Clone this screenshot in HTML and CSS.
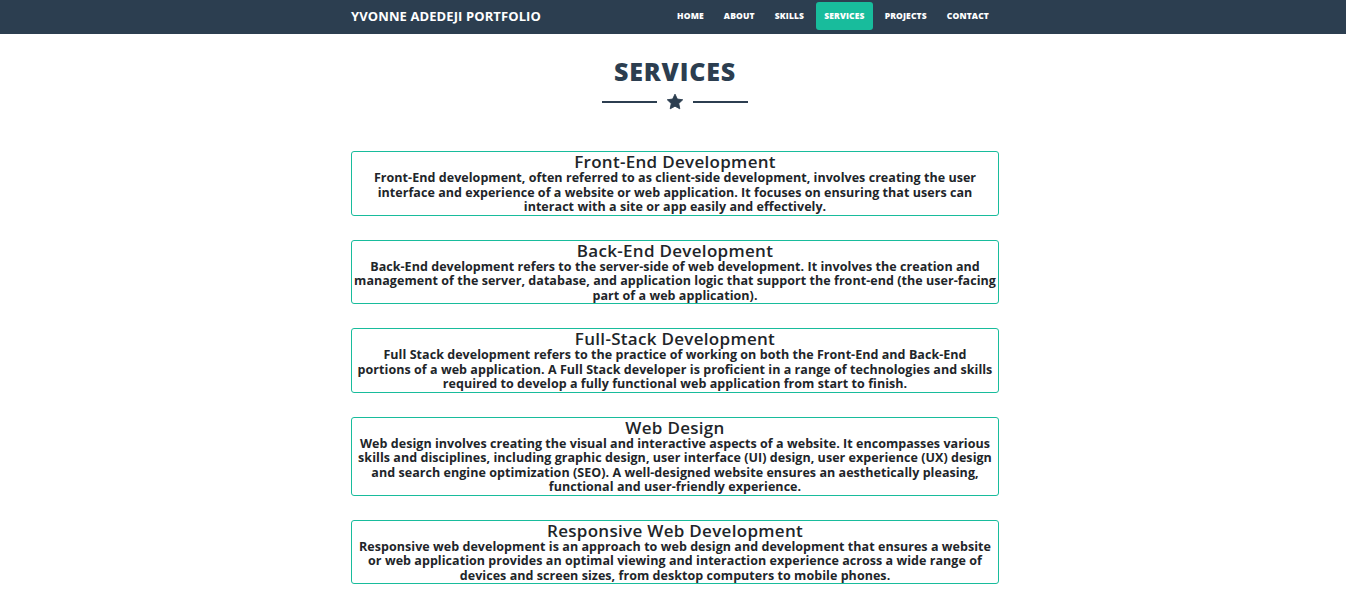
FILE: index.html
```html
<!DOCTYPE html>
<html lang="en">
<head>
<meta charset="utf-8">
<title>Yvonne Adedeji Portfolio - Services</title>
<link rel="stylesheet" href="styles.css">
</head>
<body>
<nav class="navbar">
  <div class="nav-inner">
    <a class="brand" href="#">YVONNE ADEDEJI PORTFOLIO</a>
    <ul class="nav-links">
      <li><a href="#">HOME</a></li>
      <li><a href="#">ABOUT</a></li>
      <li><a href="#">SKILLS</a></li>
      <li><a class="active" href="#">SERVICES</a></li>
      <li><a href="#">PROJECTS</a></li>
      <li><a href="#">CONTACT</a></li>
    </ul>
  </div>
</nav>
<main class="page">
  <h1 class="section-title">SERVICES</h1>
  <div class="divider">
    <span class="divider-line"></span>
    <svg class="divider-star" viewBox="0 0 24 24" width="18" height="18" aria-hidden="true"><path d="M12 1.5l3.1 6.6 7.2.9-5.3 5 1.4 7.1L12 17.6l-6.4 3.5 1.4-7.1-5.3-5 7.2-.9z" fill="#2c3e50" stroke="#2c3e50" stroke-width="1.2" stroke-linejoin="round"/></svg>
    <span class="divider-line"></span>
  </div>
  <section class="cards">
    <article class="card">
      <h2 class="card-title">Front-End Development</h2>
      <p class="card-text">Front-End development, often referred to as client-side development, involves creating the user interface and experience of a website or web application. It focuses on ensuring that users can interact with a site or app easily and effectively.</p>
    </article>
    <article class="card">
      <h2 class="card-title">Back-End Development</h2>
      <p class="card-text">Back-End development refers to the server-side of web development. It involves the creation and management of the server, database, and application logic that support the front-end (the user-facing part of a web application).</p>
    </article>
    <article class="card">
      <h2 class="card-title">Full-Stack Development</h2>
      <p class="card-text">Full Stack development refers to the practice of working on both the Front-End and Back-End<br>portions of a web application. A Full Stack developer is proficient in a range of technologies and skills required to develop a fully functional web application from start to finish.</p>
    </article>
    <article class="card">
      <h2 class="card-title">Web Design</h2>
      <p class="card-text">Web design involves creating the visual and interactive aspects of a website. It encompasses various skills and disciplines, including graphic design, user interface (UI) design, user experience (UX) design and search engine optimization (SEO). A well-designed website ensures an aesthetically pleasing, functional and user-friendly experience.</p>
    </article>
    <article class="card">
      <h2 class="card-title">Responsive Web Development</h2>
      <p class="card-text">Responsive web development is an approach to web design and development that ensures a website or web application provides an optimal viewing and interaction experience across a wide range of devices and screen sizes, from desktop computers to mobile phones.</p>
    </article>
  </section>
</main>
</body>
</html>
```
FILE: styles.css
```css
* { box-sizing: border-box; }
html, body { margin: 0; padding: 0; }
body {
  font-family: "Open Sans", "DejaVu Sans", sans-serif;
  color: #212529;
  background: #fff;
  padding-left: 4px;
}
.navbar {
  background: #2c3e50;
  height: 34px;
  margin-left: -4px;
  padding: 2px 0 4px 4px;
}
.nav-inner {
  width: 648px;
  margin: 0 auto;
  display: flex;
  align-items: center;
  justify-content: space-between;
  height: 28px;
}
.brand {
  color: #fff;
  text-decoration: none;
  font-weight: 700;
  font-size: 13px;
  letter-spacing: 0.1px;
}
.nav-links {
  list-style: none;
  display: flex;
  gap: 4px;
  margin: 0 2px 0 0;
  padding: 0;
}
.nav-links a {
  display: block;
  height: 28px;
  line-height: 28px;
  padding: 0 8px;
  color: #fff;
  text-decoration: none;
  font-size: 8.5px;
  font-weight: 800;
  letter-spacing: 0.15px;
  border-radius: 3px;
}
.nav-links a.active { background: #18bc9c; }
.page {
  width: 648px;
  margin: 0 auto;
}
.section-title {
  margin: 0;
  padding-top: 21px;
  text-align: center;
  font-size: 25px;
  font-weight: 800;
  color: #2c3e50;
  line-height: 32px;
  letter-spacing: 0.8px;
}
.divider {
  display: flex;
  align-items: center;
  justify-content: center;
  gap: 9px;
  margin-top: 6px;
  height: 18px;
}
.divider-line {
  width: 55px;
  height: 2px;
  background: #2c3e50;
}
.cards {
  display: flex;
  flex-direction: column;
  gap: 24px;
  margin-top: 40px;
  padding-bottom: 20px;
}
.card {
  border: 1px solid #18bc9c;
  border-radius: 3px;
  text-align: center;
}
.card-title {
  margin: 0;
  font-size: 17px;
  font-weight: 600;
  line-height: 19px;
  letter-spacing: 0.3px;
}
.card-text {
  margin: 0;
  font-size: 12.5px;
  font-weight: 700;
  line-height: 14.5px;
  letter-spacing: 0.05px;
}
```
